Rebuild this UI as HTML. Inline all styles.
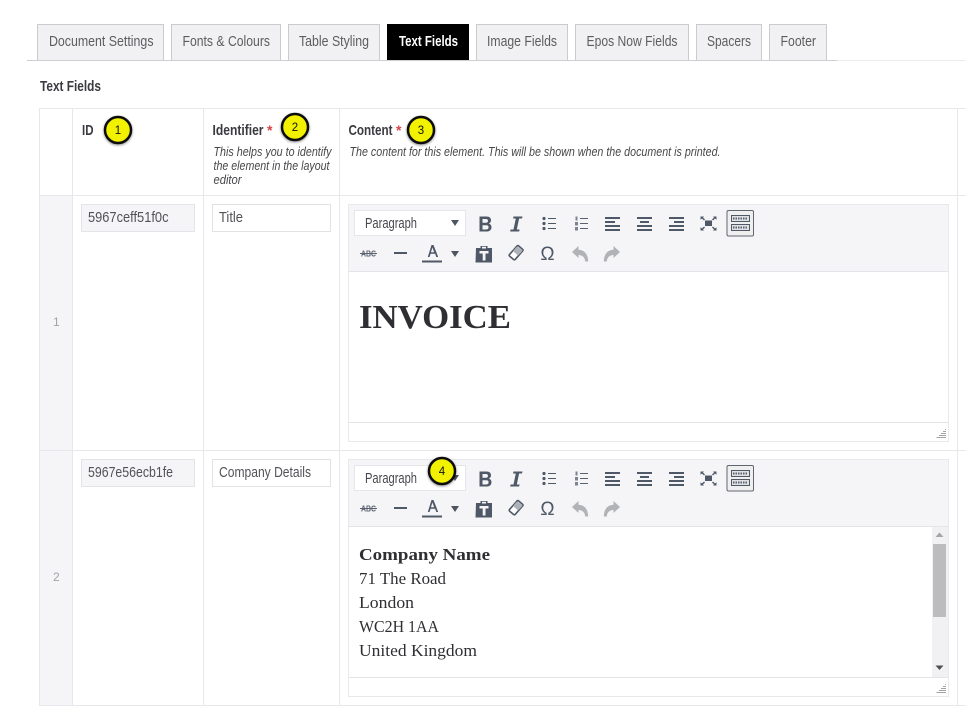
<!DOCTYPE html>
<html><head><meta charset="utf-8"><style>
html,body{margin:0;padding:0;background:#fff;width:966px;height:706px;overflow:hidden}
svg{display:block}
text{font-family:"Liberation Sans",sans-serif}
.s{font-family:"Liberation Serif",serif;fill:#2f2f33}
.tab{font-size:15px;fill:#5d5d5f}
.h{font-size:15px;font-weight:bold;fill:#3a3a40}
.n{font-size:12.500px;font-style:italic;fill:#47474b}
.v{font-size:15px;fill:#525258}
.p{font-size:15px;fill:#46464c}
.c{font-size:11.500px;fill:#111;text-anchor:middle}
</style></head><body>
<svg width="966" height="706" viewBox="0 0 966 706" xmlns="http://www.w3.org/2000/svg">
<defs>
<filter id="sh" x="-40%" y="-40%" width="180%" height="180%"><feDropShadow dx="0" dy="1" stdDeviation="1.2" flood-color="#000" flood-opacity=".45"/></filter>
<g id="tb">
<rect x="348.500" y="204.500" width="600" height="237" fill="#fff" stroke="#e9e8ec"/>
<rect x="349" y="205" width="599" height="66.500" fill="#f5f5f7"/>
<path d="M348 271.500H949M348 422.500H949" stroke="#e4e3e7"/>
<rect x="354.500" y="210.500" width="111" height="25" fill="#fff" stroke="#e6e6ea"/>
<path d="M451 220h8l-4 6z" fill="#4e5560"/>
<path fill-rule="evenodd" fill="#4e5866" d="M479.500 216.500h7c3 0 4.500 1.500 4.500 3.800 0 1.700-.9 2.800-2.200 3.300 1.700.4 2.700 1.700 2.700 3.500 0 2.700-1.900 4.400-5 4.400h-7zM482.500 219v3.800h3.500c1.300 0 2-.7 2-1.900s-.7-1.900-2-1.900zM482.500 225.200v4.300h3.800c1.500 0 2.300-.8 2.300-2.200s-.8-2.100-2.300-2.100z"/>
<path fill="#4e5866" d="M513.500 216.500h9l-.5 2h-2.900l-2.300 11h2.800l-.5 2h-9l.5-2h2.900l2.300-11h-2.800z"/>
<g fill="#4e5866"><circle cx="544" cy="218.500" r="1.600"/><circle cx="544" cy="223.500" r="1.600"/><circle cx="544" cy="228.500" r="1.600"/><rect x="548" y="218" width="8" height="1"/><rect x="548" y="223" width="8" height="1"/><rect x="548" y="228" width="8" height="1"/></g>
<g fill="#5a6270"><rect x="580" y="218" width="8" height="1"/><rect x="580" y="223" width="8" height="1"/><rect x="580" y="228" width="8" height="1"/></g>
<g fill="#7b8390"><rect x="575.500" y="216.500" width="2" height="4"/><rect x="575" y="222" width="3" height="3.500"/><rect x="575" y="227" width="3" height="3.500"/></g>
<g fill="#4e5866"><rect x="605" y="217" width="15" height="2"/><rect x="605" y="221" width="10" height="2"/><rect x="605" y="225" width="15" height="2"/><rect x="605" y="229" width="15" height="2"/>
<rect x="637" y="217" width="15" height="2"/><rect x="640" y="221" width="9" height="2"/><rect x="637" y="225" width="15" height="2"/><rect x="637" y="229" width="15" height="2"/>
<rect x="669" y="217" width="15" height="2"/><rect x="674" y="221" width="10" height="2"/><rect x="669" y="225" width="15" height="2"/><rect x="669" y="229" width="15" height="2"/></g>
<path fill="#4e5866" d="M705 220.500h7v5.500h-7zM700.500 216.500h3.500l-1 1 2 2-1 1-2-2-1.500 1.200zM716.500 216.500v3.200l-1.500-1.200-2 2-1-1 2-2-1-1zM700.500 230.500v-3.200l1.500 1.200 2-2 1 1-2 2 1 1zM716.500 230.500h-3.500l1-1-2-2 1-1 2 2 1.500-1.200z"/>
<rect x="727" y="210.500" width="26.500" height="25.500" rx="1.500" fill="#efefef" stroke="#60666e"/>
<g fill="#dfe1e4" stroke="#4e5866"><rect x="731.500" y="215.500" width="18" height="6"/><rect x="731.500" y="224.500" width="18" height="6"/></g>
<path d="M733 218.500h15M733 227.500h15" stroke="#59616d" stroke-dasharray="1.500 1" stroke-width="2"/>
<rect x="394" y="252" width="13" height="2" fill="#4e5866"/>
<path fill="#4e5866" d="M431.500 245h2l4.700 12h-1.900l-1.200-3.300h-4.400l-1.200 3.300h-1.700zM432.500 247.500l-1.600 4.800h3.200z"/><rect x="422" y="260.500" width="20" height="2" fill="#4e5866"/>
<path d="M451 251h8l-4 6z" fill="#4e5560"/>
<path fill="#4e5866" fill-rule="evenodd" d="M476 248h4.500v-2h7v2H492v14.500h-16.500zM482 246.800v1.700h4v-1.700zM479.500 251v2.500h3.200v7h2.800v-7h3v-2.500z"/>
<path fill="#fff" stroke="#4e5866" stroke-width="1.600" d="M509.500 254.500l7.500-8.500c.5-.5 1.100-.5 1.600-.1l4 3.400c.5.500.5 1.100.1 1.600l-7.500 8.500c-.5.500-1.100.5-1.600.1l-4-3.400c-.5-.5-.5-1.100-.1-1.600z"/>
<path fill="#aeb2b8" d="M516 247.500l1.500-1 5 4-1 1.500-3.500 3.500-5-4.500z"/>
<path fill="#b1b3b6" d="M572 252l6.500-6v3.800c5.500.3 9.500 3.800 9.700 11.700h-3c-.3-4.300-2.800-6.300-6.700-6.500v3z"/>
<path fill="#b1b3b6" d="M620 252l-6.500-6v3.800c-5.500.3-9.500 3.800-9.700 11.700h3c.3-4.300 2.800-6.300 6.700-6.500v3z"/>
<path d="M945 429.500h1M943 431.500h3M941 433.500h5M939 435.500h7M936.500 437.500h9.500" stroke="#a4a4a8" stroke-width="1"/>
</g>
</defs>

<rect width="966" height="706" fill="#fff"/>
<path d="M27 60.500H837" stroke="#cfcfd2"/><path d="M837 60.500H966" stroke="#ececef"/>

<g fill="#f1f0f3" stroke="#cbcbce">
<path d="M37.500 60V24.500H163.500V60"/>
<path d="M171.500 60V24.500H280.500V60"/>
<path d="M288.500 60V24.500H379.500V60"/>
<path d="M476.500 60V24.500H567.500V60"/>
<path d="M575.500 60V24.500H688.500V60"/>
<path d="M696.500 60V24.500H761.500V60"/>
<path d="M769.500 60V24.500H826.500V60"/>
</g>
<rect x="387" y="24" width="82" height="36" fill="#000"/>
<text class="tab" x="49" y="46" textLength="104.500" lengthAdjust="spacingAndGlyphs">Document Settings</text>
<text class="tab" x="182.500" y="46" textLength="87.500" lengthAdjust="spacingAndGlyphs">Fonts &amp; Colours</text>
<text class="tab" x="299" y="46" textLength="70" lengthAdjust="spacingAndGlyphs">Table Styling</text>
<text class="tab" x="399" y="46" textLength="59" lengthAdjust="spacingAndGlyphs" style="fill:#fff;font-weight:bold">Text Fields</text>
<text class="tab" x="487" y="46" textLength="70" lengthAdjust="spacingAndGlyphs">Image Fields</text>
<text class="tab" x="586.500" y="46" textLength="91" lengthAdjust="spacingAndGlyphs">Epos Now Fields</text>
<text class="tab" x="707" y="46" textLength="44" lengthAdjust="spacingAndGlyphs">Spacers</text>
<text class="tab" x="780.500" y="46" textLength="35.500" lengthAdjust="spacingAndGlyphs">Footer</text>

<text class="h" x="40" y="91" textLength="61" lengthAdjust="spacingAndGlyphs">Text Fields</text>

<rect x="40" y="196" width="32" height="510" fill="#f5f4f7"/>
<path d="M39.500 108V706M72.500 108V706M203.500 108V706M339.500 108V706M957.500 108V706" stroke="#e8e7eb"/>
<path d="M39 108.500H966M39 195.500H966M39 450.500H966M39 705.500H966" stroke="#e8e7eb"/>

<text class="h" x="82" y="135" textLength="11.500" lengthAdjust="spacingAndGlyphs">ID</text>
<text class="h" x="212.500" y="135" textLength="51" lengthAdjust="spacingAndGlyphs">Identifier</text>
<text x="267" y="135" font-size="14" fill="#d9414a" font-weight="bold">*</text>
<text class="h" x="348.500" y="135" textLength="44" lengthAdjust="spacingAndGlyphs">Content</text>
<text x="396" y="135" font-size="14" fill="#d9414a" font-weight="bold">*</text>
<text class="n" x="213.500" y="156" textLength="118" lengthAdjust="spacingAndGlyphs">This helps you to identify</text>
<text class="n" x="213.500" y="170" textLength="116" lengthAdjust="spacingAndGlyphs">the element in the layout</text>
<text class="n" x="213.500" y="184" textLength="28" lengthAdjust="spacingAndGlyphs">editor</text>
<text class="n" x="349.500" y="156" textLength="371" lengthAdjust="spacingAndGlyphs">The content for this element. This will be shown when the document is printed.</text>

<text x="53" y="326" font-size="12" fill="#a2a2a6">1</text>
<text x="53" y="581" font-size="12" fill="#a2a2a6">2</text>

<rect x="81.500" y="204.500" width="113" height="27" fill="#f5f4f6" stroke="#e4e3e7"/>
<rect x="212.500" y="204.500" width="118" height="27" fill="#fff" stroke="#e2e1e5"/>
<text class="v" x="88" y="222" textLength="80.500" lengthAdjust="spacingAndGlyphs">5967ceff51f0c</text>
<text class="v" x="219" y="222" textLength="24" lengthAdjust="spacingAndGlyphs">Title</text>
<rect x="81.500" y="459.500" width="113" height="27" fill="#f5f4f6" stroke="#e4e3e7"/>
<rect x="212.500" y="459.500" width="118" height="27" fill="#fff" stroke="#e2e1e5"/>
<text class="v" x="88" y="477" textLength="85" lengthAdjust="spacingAndGlyphs">5967e56ecb1fe</text>
<text class="v" x="219" y="477" textLength="92" lengthAdjust="spacingAndGlyphs">Company Details</text>

<use href="#tb"/>
<use href="#tb" y="255"/>

<text class="p" x="365" y="228" textLength="52" lengthAdjust="spacingAndGlyphs">Paragraph</text>
<text class="p" x="365" y="483" textLength="52" lengthAdjust="spacingAndGlyphs">Paragraph</text>
<text x="361" y="256.500" textLength="15" lengthAdjust="spacingAndGlyphs" font-weight="bold" fill="#5a6270" style="font-size:8.500px">ABC</text>
<text x="361" y="511.500" textLength="15" lengthAdjust="spacingAndGlyphs" font-weight="bold" fill="#5a6270" style="font-size:8.500px">ABC</text>
<path d="M360 253.500h17M360 508.500h17" stroke="#5a6270"/>
<text x="547.500" y="260" font-size="19" fill="#4e5866" text-anchor="middle">Ω</text>
<text x="547.500" y="515" font-size="19" fill="#4e5866" text-anchor="middle">Ω</text>

<text class="s" x="359" y="328" font-size="34" font-weight="bold" textLength="152" lengthAdjust="spacingAndGlyphs">INVOICE</text>
<text class="s" x="359" y="560" font-size="17" font-weight="bold" textLength="131" lengthAdjust="spacingAndGlyphs">Company Name</text>
<text class="s" x="359" y="584" font-size="17" textLength="87" lengthAdjust="spacingAndGlyphs">71 The Road</text>
<text class="s" x="359" y="608" font-size="17" textLength="55" lengthAdjust="spacingAndGlyphs">London</text>
<text class="s" x="359" y="632" font-size="17" textLength="80" lengthAdjust="spacingAndGlyphs">WC2H 1AA</text>
<text class="s" x="359" y="656" font-size="17" textLength="118" lengthAdjust="spacingAndGlyphs">United Kingdom</text>

<rect x="932" y="527" width="16" height="150" fill="#f1f0f2"/>
<rect x="933" y="544" width="13" height="73" fill="#bcbcbe"/>
<path d="M935.500 537l4-4.500 4 4.500z" fill="#a5a5a8"/>
<path d="M935.500 665.500h8l-4 4.500z" fill="#505054"/>

<g fill="#f2f200" stroke="#111" stroke-width="2.500" filter="url(#sh)">
<circle cx="118" cy="130" r="13"/>
<circle cx="295" cy="127" r="13"/>
<circle cx="421" cy="130" r="13"/>
<circle cx="442" cy="471" r="13"/>
</g>
<text class="c" x="118" y="134">1</text>
<text class="c" x="295" y="131">2</text>
<text class="c" x="421" y="134">3</text>
<text class="c" x="442" y="475">4</text>
</svg>
</body></html>
